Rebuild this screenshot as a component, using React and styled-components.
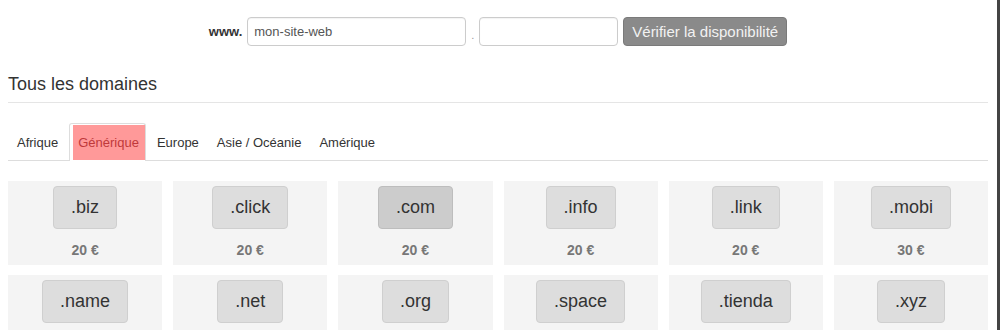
import styled, { createGlobalStyle } from "styled-components"

const GlobalStyle = createGlobalStyle`
  html, body {
    overflow: hidden;
  }
  body {
    margin: 0;
    background: #fff;
    font-family: "Liberation Sans", Arial, sans-serif;
    color: #333;
  }
`

const domains = [
  { name: ".biz", price: "20 €" },
  { name: ".click", price: "20 €" },
  { name: ".com", price: "20 €", active: true },
  { name: ".info", price: "20 €" },
  { name: ".link", price: "20 €" },
  { name: ".mobi", price: "30 €" },
  { name: ".name", price: "20 €" },
  { name: ".net", price: "20 €" },
  { name: ".org", price: "20 €" },
  { name: ".space", price: "20 €" },
  { name: ".tienda", price: "20 €" },
  { name: ".xyz", price: "20 €" },
]

const tabs = ["Afrique", "Générique", "Europe", "Asie / Océanie", "Amérique"]

const App = () => {
  return (
    <Page>
      <GlobalStyle />
      <Main>
        <SearchForm>
          <Prefix>www.</Prefix>
          <Field width="219px" defaultValue="mon-site-web" />
          <Dot>.</Dot>
          <Field width="139px" defaultValue="" />
          <CheckButton>Vérifier la disponibilité</CheckButton>
        </SearchForm>

        <Title>Tous les domaines</Title>

        <Tabs>
          {tabs.map((t) => (
            <Tab key={t} $active={t === "Générique"}>
              <TabLabel $active={t === "Générique"}>{t}</TabLabel>
            </Tab>
          ))}
        </Tabs>

        <Grid>
          {domains.map((d) => (
            <Card key={d.name}>
              <DomainButton $active={d.active}>{d.name}</DomainButton>
              <Price>{d.price}</Price>
            </Card>
          ))}
        </Grid>
      </Main>
      <EdgeBar />
    </Page>
  )
}

export default App

const Page = styled.div`
  display: flex;
  width: 1000px;
  height: 330px;
  overflow: hidden;
  box-sizing: border-box;
  padding-left: 8px;
  background: #fff;
`

const Main = styled.div`
  width: 980px;
  flex: none;
  padding-top: 17px;
`

// dark window edge on the right
const EdgeBar = styled.div`
  flex: none;
  width: 3px;
  height: 330px;
  margin-left: 9px;
  background: #444;
`

const SearchForm = styled.div`
  display: flex;
  align-items: center;
  justify-content: center;
  height: 29px;
`

const Prefix = styled.span`
  font-size: 13px;
  font-weight: bold;
  color: #333;
  margin-right: 5px;
`

const Field = styled.input`
  box-sizing: border-box;
  width: ${(p) => p.width};
  height: 29px;
  border: 1px solid #ccc;
  border-radius: 4px;
  padding: 0 6px;
  font-family: "Liberation Sans", Arial, sans-serif;
  font-size: 13px;
  color: #555;
  outline: none;
  box-shadow: inset 0 1px 1px rgba(0, 0, 0, 0.05);
`

const Dot = styled.span`
  width: 13px;
  text-align: center;
  font-size: 11px;
  color: #999;
  padding-top: 6px;
`

const CheckButton = styled.button`
  box-sizing: border-box;
  margin-left: 5px;
  height: 29px;
  padding: 0 8px;
  background: #8a8a8a;
  border: 1px solid #7a7a7a;
  border-radius: 4px;
  color: #f2f2f2;
  font-family: "Liberation Sans", Arial, sans-serif;
  font-size: 15px;
  cursor: pointer;
`

const Title = styled.h2`
  margin: 28px 0 0;
  padding-bottom: 8px;
  font-size: 18px;
  line-height: 20px;
  font-weight: normal;
  color: #333;
  border-bottom: 1px solid #e5e5e5;
`

const Tabs = styled.div`
  display: flex;
  align-items: flex-end;
  margin-top: 20px;
  border-bottom: 1px solid #ddd;
  height: 37px;
`

const Tab = styled.div`
  box-sizing: border-box;
  display: flex;
  height: ${(p) => (p.$active ? "38px" : "37px")};
  margin: ${(p) => (p.$active ? "0 2px -1px 2px" : "0")};
  padding: ${(p) => (p.$active ? "1px 0 1px 3px" : "0")};
  border: 1px solid ${(p) => (p.$active ? "#ddd" : "transparent")};
  border-bottom: none;
  border-radius: 3px 3px 0 0;
  background: ${(p) => (p.$active ? "#fff" : "transparent")};
`

const TabLabel = styled.span`
  display: flex;
  align-items: center;
  padding: ${(p) => (p.$active ? "0 6px 0 5px" : "0 8px")};
  background: ${(p) => (p.$active ? "#ff9999" : "transparent")};
  color: ${(p) => (p.$active ? "#c0393b" : "#333")};
  font-size: 13px;
`

const Grid = styled.div`
  display: grid;
  grid-template-columns: repeat(6, 1fr);
  column-gap: 11px;
  row-gap: 10px;
  margin-top: 20px;
`

const Card = styled.div`
  background: #f4f4f4;
  display: flex;
  flex-direction: column;
  align-items: center;
  padding: 5px 0 6px;
`

const DomainButton = styled.button`
  box-sizing: border-box;
  height: 43px;
  padding: 0 17px;
  background: ${(p) => (p.$active ? "#cccccc" : "#dddddd")};
  border: 1px solid ${(p) => (p.$active ? "#bdbdbd" : "#cfcfcf")};
  border-radius: 4px;
  font-family: "Liberation Sans", Arial, sans-serif;
  font-size: 18px;
  color: #333;
  cursor: pointer;
`

const Price = styled.div`
  margin-top: 12px;
  line-height: 18px;
  font-size: 14px;
  font-weight: bold;
  color: #777;
`
